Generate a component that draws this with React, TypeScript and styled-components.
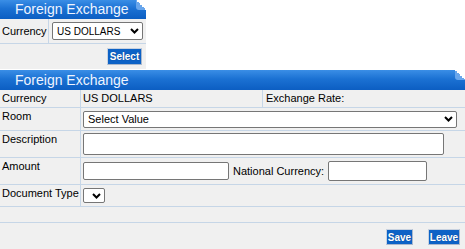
import React from "react";
import styled, { createGlobalStyle } from "styled-components";

const GlobalStyle = createGlobalStyle`
  *, *::before, *::after {
    box-sizing: border-box;
  }
  html, body {
    margin: 0;
    padding: 0;
    background: #fff;
  }
  body {
    font-family: "Liberation Sans", Arial, sans-serif;
    font-size: 11px;
    color: #000;
  }
`;

const Page = styled.div`
  display: flex;
  flex-direction: column;
  gap: 1px;
  width: 465px;
`;

const Panel = styled.div<{ $width?: number }>`
  width: ${(p) => (p.$width ? `${p.$width}px` : "100%")};
  background: #f0f0f0;
`;

const Header = styled.div<{ $height: number }>`
  position: relative;
  height: ${(p) => p.$height}px;
  line-height: ${(p) => p.$height}px;
  padding-left: 15px;
  font-size: 14px;
  color: #eef4ff;
  background: linear-gradient(#3a8ee6 0%, #1b71d3 45%, #0c5ec2 100%);

  &::after {
    content: "";
    position: absolute;
    top: 0;
    right: 0;
    width: 10px;
    height: 10px;
    background: linear-gradient(to bottom left, #fff 50%, #68a6ec 50%);
    border-bottom-left-radius: 3px;
  }
`;

const Row = styled.div<{ $height: number }>`
  display: flex;
  height: ${(p) => p.$height + 1}px;
  border-bottom: 1px solid #c6d6e7;
`;

const Label = styled.div<{ $width: number; $middle?: boolean }>`
  width: ${(p) => p.$width}px;
  flex-shrink: 0;
  display: flex;
  align-items: ${(p) => (p.$middle ? "center" : "flex-start")};
  padding: ${(p) => (p.$middle ? 0 : 2)}px 0 0 2px;
  line-height: 13px;
  border-right: 1px solid #c6d6e7;
`;

const Value = styled.div<{ $width?: number; $divider?: boolean; $pad?: number }>`
  ${(p) => (p.$width ? `width: ${p.$width}px; flex-shrink: 0;` : "flex: 1;")}
  display: flex;
  align-items: center;
  gap: 4px;
  padding-left: ${(p) => p.$pad ?? 2}px;
  line-height: 13px;
  border-right: ${(p) => (p.$divider ? "1px solid #c6d6e7" : "none")};
`;

const TextValue = styled.div<{ $pad?: number }>`
  align-self: flex-start;
  padding: 2px 0 0 ${(p) => p.$pad ?? 2}px;
  line-height: 13px;
`;

const SelectWrap = styled.span`
  position: relative;
  display: inline-flex;
`;

const Select = styled.select<{ $w: number; $h: number; $size?: number }>`
  appearance: none;
  width: ${(p) => p.$w}px;
  height: ${(p) => p.$h}px;
  margin: 0;
  padding: 0 0 0 4px;
  border: 1px solid #767676;
  border-radius: 2px;
  background: #fff;
  font-family: "Liberation Sans", Arial, sans-serif;
  font-size: ${(p) => p.$size ?? 11}px;
  color: #000;
  outline: none;
`;

const Chevron = styled.svg`
  position: absolute;
  right: 4px;
  top: 50%;
  margin-top: -3px;
  pointer-events: none;
`;

const Input = styled.input<{ $w: number; $h: number }>`
  width: ${(p) => p.$w}px;
  height: ${(p) => p.$h}px;
  margin: 0;
  padding: 0 3px;
  border: 1px solid #767676;
  border-radius: 2px;
  background: #fff;
  font-family: "Liberation Sans", Arial, sans-serif;
  font-size: 11px;
`;

const ButtonBar = styled.div<{ $height: number; $gap?: number; $pad: string }>`
  display: flex;
  justify-content: flex-end;
  align-items: flex-start;
  gap: ${(p) => p.$gap ?? 0}px;
  height: ${(p) => p.$height}px;
  padding: ${(p) => p.$pad};
`;

const Button = styled.button<{ $w: number; $h: number }>`
  width: ${(p) => p.$w}px;
  height: ${(p) => p.$h}px;
  margin: 0;
  padding: 0;
  border: 1px solid #aab8cc;
  border-top-color: #c8d2e0;
  border-left-color: #c8d2e0;
  background: #0d62c6;
  color: #fff;
  font-family: "Liberation Sans", Arial, sans-serif;
  font-size: 10px;
  font-weight: bold;
  text-shadow: 0 0 1px #0a3c80;
  cursor: pointer;
`;

function Dropdown({ w, h, size, value }: { w: number; h: number; size?: number; value?: string }) {
  return (
    <SelectWrap>
      <Select $w={w} $h={h} $size={size} defaultValue={value ?? ""}>
        <option value={value ?? ""}>{value ?? ""}</option>
      </Select>
      <Chevron width="9" height="6" viewBox="0 0 9 6">
        <path d="M1 1 L4.5 4.5 L8 1" fill="none" stroke="#000" strokeWidth="2" />
      </Chevron>
    </SelectWrap>
  );
}

export default function App() {
  return (
    <>
      <GlobalStyle />
      <Page>
        <Panel $width={146}>
          <Header $height={19}>Foreign Exchange</Header>
          <Row $height={24}>
            <Label $width={49} $middle>Currency</Label>
            <Value $pad={3}>
              <Dropdown w={91} h={18} size={10} value="US DOLLARS" />
            </Value>
          </Row>
          <ButtonBar $height={25} $pad="4px 4px 0 0">
            <Button $w={35} $h={17}>Select</Button>
          </ButtonBar>
        </Panel>

        <Panel>
          <Header $height={20}>Foreign Exchange</Header>
          <Row $height={17}>
            <Label $width={81}>Currency</Label>
            <Value $width={182} $divider $pad={0}>
              <TextValue>US DOLLARS</TextValue>
            </Value>
            <TextValue $pad={3}>Exchange Rate:</TextValue>
          </Row>
          <Row $height={22}>
            <Label $width={81}>Room</Label>
            <Value>
              <Dropdown w={374} h={17} value="Select Value" />
            </Value>
          </Row>
          <Row $height={26}>
            <Label $width={81}>Description</Label>
            <Value>
              <Input $w={361} $h={22} />
            </Value>
          </Row>
          <Row $height={26}>
            <Label $width={81}>Amount</Label>
            <Value>
              <Input $w={146} $h={18} />
              <span>National Currency:</span>
              <Input $w={99} $h={20} />
            </Value>
          </Row>
          <Row $height={21}>
            <Label $width={81}>Document Type</Label>
            <Value>
              <Dropdown w={22} h={15} />
            </Value>
          </Row>
          <Row $height={15} />
          <ButtonBar $height={26} $gap={15} $pad="6px 5px 0 0">
            <Button $w={27} $h={16}>Save</Button>
            <Button $w={32} $h={16}>Leave</Button>
          </ButtonBar>
        </Panel>
      </Page>
    </>
  );
}
